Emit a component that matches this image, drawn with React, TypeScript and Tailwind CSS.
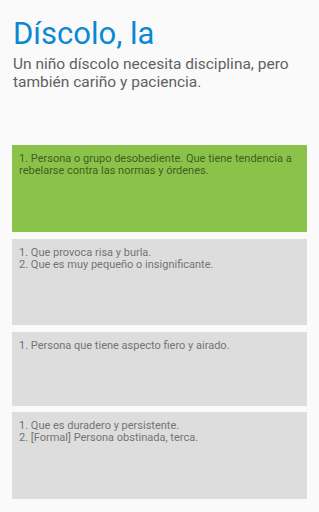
import React from "react";

const boxes = [
  { h: "h-[87px]", mt: "mt-[53px]", bg: "bg-[#8bc34a]", color: "text-[#3f5f22]", lines: ["1. Persona o grupo desobediente. Que tiene tendencia a rebelarse contra las normas y órdenes."] },
  { h: "h-[86px]", mt: "mt-[7px]", bg: "bg-[#dddddd]", color: "text-[#747474]", lines: ["1. Que provoca risa y burla.", "2. Que es muy pequeño o insignificante."] },
  { h: "h-[74px]", mt: "mt-[7px]", bg: "bg-[#dddddd]", color: "text-[#747474]", lines: ["1. Persona que tiene aspecto fiero y airado."] },
  { h: "h-[87px]", mt: "mt-[6px]", bg: "bg-[#dddddd]", color: "text-[#747474]", lines: ["1. Que es duradero y persistente.", "2. [Formal] Persona obstinada, terca."] },
];

export default function App() {
  return (
    <div className="w-[319px] h-[512px] bg-[#fafafa] overflow-hidden" style={{ fontFamily: "Roboto, 'Noto Sans', sans-serif" }}>
      <div className="pl-[13px] pt-[16px]">
        <div className="text-[31px] leading-[36px] text-[#0a88d4]">Díscolo, la</div>
        <div className="text-[15.5px] leading-[18px] text-[#616161] mt-[3px] pr-2">
          Un niño díscolo necesita disciplina, pero también cariño y paciencia.
        </div>
      </div>
      <div className="px-[12px] pt-[1px]">
        {boxes.map((b, i) => (
          <div key={i} className={`${b.h} ${b.mt} ${b.bg} ${b.color} w-[295px] pl-[7px] pr-[4px] pt-[7.5px] text-[11px] leading-[12.7px]`}>
            {b.lines.map((l, j) => (
              <div key={j}>{l}</div>
            ))}
          </div>
        ))}
      </div>
    </div>
  );
}
